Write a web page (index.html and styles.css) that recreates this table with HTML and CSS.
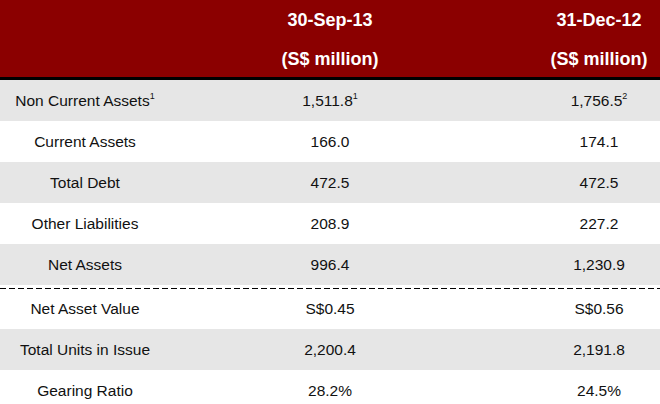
FILE: index.html
```html
<!DOCTYPE html>
<html>
<head>
<meta charset="utf-8">
<link rel="stylesheet" href="styles.css">
</head>
<body>
<div class="table">
  <div class="head">
    <div class="c1"></div>
    <div class="c2"><div class="hl">30-Sep-13</div><div class="hl">(S$ million)</div></div>
    <div class="c3"><div class="hl">31-Dec-12</div><div class="hl">(S$ million)</div></div>
  </div>
  <div class="rule"></div>
  <div class="row gray"><div class="c1">Non Current Assets<sup>1</sup></div><div class="c2">1,511.8<sup>1</sup></div><div class="c3">1,756.5<sup>2</sup></div></div>
  <div class="row"><div class="c1">Current Assets</div><div class="c2">166.0</div><div class="c3">174.1</div></div>
  <div class="row gray"><div class="c1">Total Debt</div><div class="c2">472.5</div><div class="c3">472.5</div></div>
  <div class="row"><div class="c1">Other Liabilities</div><div class="c2">208.9</div><div class="c3">227.2</div></div>
  <div class="row gray"><div class="c1">Net Assets</div><div class="c2">996.4</div><div class="c3">1,230.9</div></div>
  <div class="dash"></div>
  <div class="row tall"><div class="c1">Net Asset Value</div><div class="c2">S$0.45</div><div class="c3">S$0.56</div></div>
  <div class="row gray"><div class="c1">Total Units in Issue</div><div class="c2">2,200.4</div><div class="c3">2,191.8</div></div>
  <div class="row"><div class="c1">Gearing Ratio</div><div class="c2">28.2%</div><div class="c3">24.5%</div></div>
</div>
</body>
</html>
```
FILE: styles.css
```css
html, body {
  margin: 0;
  padding: 0;
  background: #ffffff;
}
body {
  font-family: "Liberation Sans", Arial, sans-serif;
  color: #111111;
  width: 660px;
  height: 404px;
  overflow: hidden;
}
.table {
  display: flex;
  flex-direction: column;
}
.head, .row {
  display: grid;
  grid-template-columns: 170px 320px 170px;
}
.head {
  background: #8b0000;
  color: #ffffff;
  height: 77px;
  font-weight: bold;
  font-size: 18px;
}
.head .c2, .head .c3 {
  display: flex;
  flex-direction: column;
  align-items: center;
  padding-top: 1px;
}
.hl {
  height: 39px;
  line-height: 39px;
}
.rule {
  height: 3px;
  background: #000000;
}
.row {
  height: 41px;
  font-size: 15.5px;
  align-items: center;
}
.row.gray {
  background: #e6e6e6;
}
.row.tall {
  height: 40px;
}
.c1, .c2, .c3 {
  text-align: center;
}
.c3 {
  padding-left: 48px;
}
sup {
  font-size: 9px;
  line-height: 0;
  vertical-align: 7px;
}
.dash {
  height: 1px;
  margin-top: 3px;
  background: repeating-linear-gradient(to right, #000 0 6px, transparent 6px 9px);
}
```
